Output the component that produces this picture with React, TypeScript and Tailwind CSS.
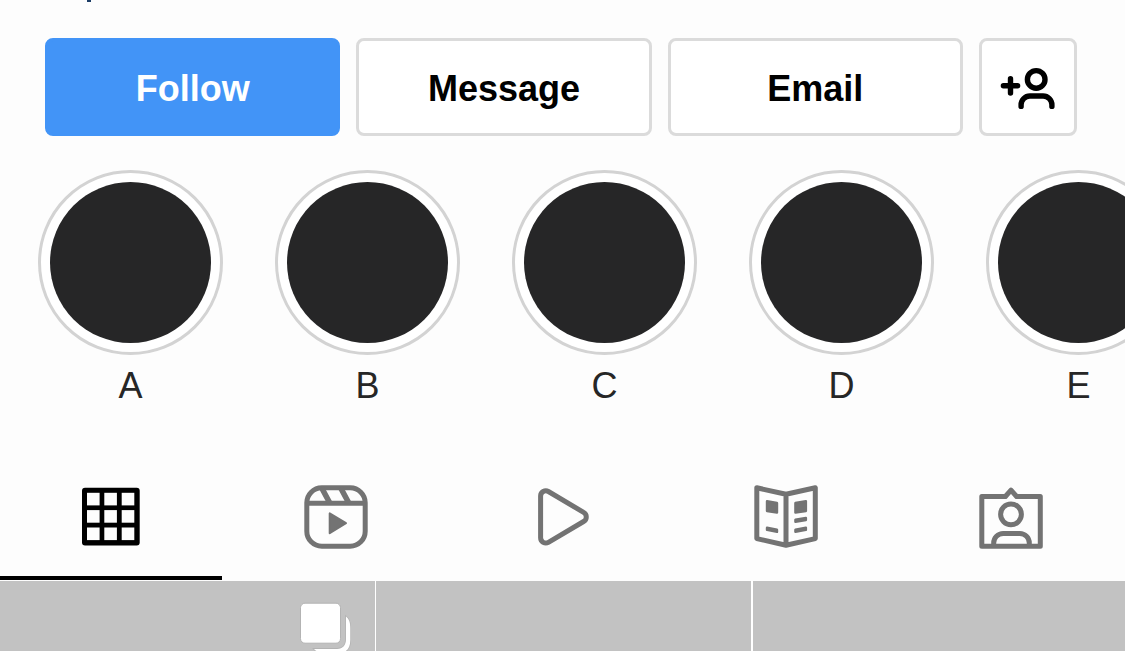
import React from 'react';

const stories = ['A', 'B', 'C', 'D', 'E'];

const AddUserIcon: React.FC = () => (
  <svg width="57" height="45" viewBox="0 0 57 45" fill="none" stroke="currentColor" strokeWidth="5.4" strokeLinecap="round">
    <path d="M4.4 20.8H18.6M11.5 13.7V28" />
    <circle cx="37.2" cy="14.4" r="8.8" />
    <path d="M22.1 41.4V39.8A8.8 8.8 0 0 1 30.9 31H44.1A8.8 8.8 0 0 1 52.9 39.8V41.4" />
  </svg>
);

const GridIcon: React.FC = () => (
  <svg width="64" height="64" viewBox="0 0 64 64">
    <rect x="3" y="2.7" width="57.7" height="57.8" rx="3" fill="currentColor" />
    {[8, 25.3, 42.7].map((y) =>
      [8, 25.3, 42.7].map((x) => (
        <rect key={`${x}-${y}`} x={x} y={y - 0.2} width="12.6" height="12.6" fill="#fdfdfd" />
      ))
    )}
  </svg>
);

const ReelsIcon: React.FC = () => (
  <svg width="64" height="64" viewBox="0 0 64 64" fill="none" stroke="currentColor" strokeWidth="5">
    <rect x="2.8" y="2.8" width="58.4" height="58.4" rx="15" />
    <path d="M2.7 18.2H61.1" />
    <path d="M17.6 2.7L25.8 18M36.6 2.7L44.8 18" strokeWidth="5.6" />
    <path d="M25.7 28.4V48.2L42 38.2Z" fill="currentColor" strokeWidth="2" strokeLinejoin="round" />
  </svg>
);

const PlayIcon: React.FC = () => (
  <svg width="64" height="64" viewBox="0 0 64 64" fill="none" stroke="currentColor" strokeWidth="5">
    <path d="M11.6 11A5.2 5.2 0 0 1 19.4 6.5L54.6 27.4A5.2 5.2 0 0 1 54.6 36.5L19.4 57.3A5.2 5.2 0 0 1 11.6 52.8Z" />
  </svg>
);

const GuideIcon: React.FC = () => (
  <svg width="64" height="64" viewBox="0 0 64 64" fill="none" stroke="currentColor" strokeLinejoin="round">
    <path d="M2.8 2.8L32 9.2L61.3 2.8V53.6L32 60.2L2.8 53.6ZM32 9V60" strokeWidth="5" />
    <g fill="currentColor" strokeWidth="2.4">
      <path d="M13 16.3L23 17.9V27.6L13 26Z" />
      <path d="M13 42.8L23 44.8V46.9L13 44.9Z" />
      <path d="M41.4 17.9L51.9 16.3V26L41.4 27.6Z" />
      <path d="M41.4 34.7L51.9 32.9V35.1L41.4 36.9Z" />
      <path d="M41.4 44.8L51.9 42.8V44.9L41.4 46.9Z" />
    </g>
  </svg>
);

const TaggedIcon: React.FC = () => (
  <svg width="64" height="64" viewBox="0 0 64 64" fill="none" stroke="currentColor" strokeWidth="5" strokeLinejoin="round">
    <path d="M2.8 11.5H26.4L32 5.2L37.6 11.5H61.3V61.2H2.8Z" />
    <circle cx="32" cy="29.3" r="10.4" />
    <path d="M14.7 61V57.9A9.5 9.5 0 0 1 24.2 48.4H40.8A9.5 9.5 0 0 1 50.3 57.9V61" />
  </svg>
);

const AlbumIcon: React.FC = () => (
  <svg width="51" height="53" viewBox="0 0 51 53" fill="#fff">
    <path
      d="M46 14.5C49 17 50.3 20 50.3 26V38C50.3 47 46 51 38 51H24C20 51 17 50 14 46.9H37C43 46.9 46 43 46 37Z"
      stroke="#b3b3b3"
      strokeWidth="1.6"
      paintOrder="stroke"
    />
    <rect x="0.5" y="1.2" width="40" height="40" rx="4.5" stroke="#b3b3b3" />
  </svg>
);

const tabs = [
  { label: 'Posts', icon: <GridIcon /> },
  { label: 'Reels', icon: <ReelsIcon /> },
  { label: 'Videos', icon: <PlayIcon /> },
  { label: 'Guides', icon: <GuideIcon /> },
  { label: 'Tagged', icon: <TaggedIcon /> },
];

const App: React.FC = () => {
  const button = 'flex-1 rounded-lg border-3 pt-1';
  const outlined = 'border-[#dbdbdb] bg-white text-black';

  return (
    <div className="flex h-screen flex-col overflow-hidden bg-[#fdfdfd] font-['Liberation_Sans',Arial,sans-serif] text-[#262626]">
      <div className="ml-[87px] h-[2px] w-1 shrink-0 bg-[#1c3d66]" />

      <div className="mt-9 flex h-[98px] shrink-0 gap-4 pr-12 pl-[45px] text-4xl font-bold">
        <button className={`${button} border-[#4294f7] bg-[#4294f7] text-white`}>Follow</button>
        <button className={`${button} ${outlined}`}>Message</button>
        <button className={`${button} ${outlined}`}>Email</button>
        <button
          aria-label="Similar accounts"
          className={`flex w-[98px] items-center justify-center rounded-lg border-3 ${outlined}`}
        >
          <AddUserIcon />
        </button>
      </div>

      <div className="mt-[34px] flex shrink-0 gap-[52px] overflow-hidden pl-[38px]">
        {stories.map((name) => (
          <button key={name} className="flex shrink-0 flex-col items-center">
            <span className="size-[185px] rounded-full border-3 border-[#d3d3d3] bg-white p-[9px]">
              <span className="block size-full rounded-full bg-[#262627]" />
            </span>
            <span className="mt-[11px] text-4xl">{name}</span>
          </button>
        ))}
      </div>

      <nav className="mt-[39px] mb-px grid shrink-0 grid-cols-5">
        {tabs.map((tab, i) => (
          <button
            key={tab.label}
            aria-label={tab.label}
            className={i === 0 ? 'pr-[3px] text-black' : 'pr-[3px] text-[#737373]'}
          >
            <span className="flex justify-center pt-10 pb-[27px]">{tab.icon}</span>
            <span className={i === 0 ? 'block h-1 bg-black' : 'block h-1'} />
          </button>
        ))}
      </nav>

      <div className="grid flex-1 grid-cols-[376fr_377fr_372fr]">
        <div className="flex items-start justify-end border-r border-white bg-[#c2c2c2] pt-[21px] pr-6">
          <AlbumIcon />
        </div>
        <div className="border-r-2 border-white bg-[#c2c2c2]" />
        <div className="bg-[#c2c2c2]" />
      </div>
    </div>
  );
};

export default App;
